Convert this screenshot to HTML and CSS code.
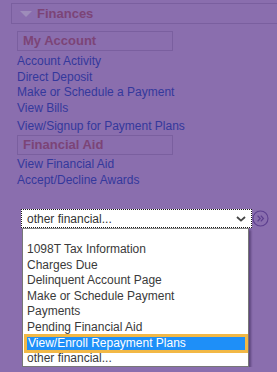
FILE: index.html
```html
<!DOCTYPE html>
<html>
<head>
<meta charset="utf-8">
<link rel="stylesheet" href="styles.css">
</head>
<body>
<div class="panel">
  <div class="hdr"><span class="tri"></span><span class="hdr-t">Finances</span></div>

  <div class="sec-box">My Account</div>
  <ul class="links">
    <li>Account Activity</li>
    <li>Direct Deposit</li>
    <li>Make or Schedule a Payment</li>
    <li>View Bills</li>
    <li class="gap">View/Signup for Payment Plans</li>
  </ul>

  <div class="sec-box sec-fa">Financial Aid</div>
  <ul class="links links-fa">
    <li>View Financial Aid</li>
    <li>Accept/Decline Awards</li>
  </ul>

  <div class="picker">
    <div class="row">
      <div class="select">
        <span class="sel-text">other financial...</span>
        <svg class="chev" width="10" height="6" viewBox="0 0 10 6"><path d="M1 1 L5 4.6 L9 1" fill="none" stroke="#444" stroke-width="1.8"/></svg>
      </div>
      <svg class="go" width="17" height="17" viewBox="0 0 17 17">
        <circle cx="8.5" cy="8.5" r="7.5" fill="none" stroke="#5d3f8f" stroke-width="1.1"/>
        <path d="M5.6 5.6 L8.2 8.5 L5.6 11.4 M8.8 5.6 L11.4 8.5 L8.8 11.4" fill="none" stroke="#5d3f8f" stroke-width="1.3"/>
      </svg>
    </div>
    <ul class="list">
      <li class="opt blank"></li>
      <li class="opt">1098T Tax Information</li>
      <li class="opt">Charges Due</li>
      <li class="opt">Delinquent Account Page</li>
      <li class="opt">Make or Schedule Payment</li>
      <li class="opt">Payments</li>
      <li class="opt">Pending Financial Aid</li>
      <li class="opt sel">View/Enroll Repayment Plans</li>
      <li class="opt">other financial...</li>
    </ul>
  </div>
</div>
</body>
</html>
```

FILE: styles.css
```css
html, body {
  margin: 0;
  padding: 0;
  background: #8a6eae;
  overflow: hidden;
}
body {
  font-family: "Liberation Sans", Arial, sans-serif;
  font-size: 12px;
}
.panel {
  padding-top: 3px;
  width: 277px;
}
.hdr {
  margin-left: 11px;
  height: 19px;
  border: 1px solid #7a5f9f;
  border-right: none;
  display: flex;
  align-items: center;
  padding-left: 8px;
}
.tri {
  width: 0;
  height: 0;
  border-left: 6.5px solid transparent;
  border-right: 6.5px solid transparent;
  border-top: 6px solid #9e8cba;
  margin-right: 5px;
}
.hdr-t {
  font-weight: bold;
  font-size: 13px;
  color: #7c4477;
}
.sec-box {
  margin: 7px 0 0 17px;
  width: 149px;
  height: 18px;
  line-height: 18px;
  border: 1px solid #7a5f9f;
  padding-left: 5px;
  font-weight: bold;
  font-size: 13px;
  color: #7c4477;
}
.links {
  list-style: none;
  margin: 3px 0 0 17px;
  padding: 0;
  line-height: 15.5px;
  color: #34389c;
}
.links .gap {
  margin-top: 2.5px;
}
.sec-fa {
  margin-top: 1px;
}
.links-fa {
  margin-top: 2px;
}
.picker {
  margin-top: 21px;
}
.row {
  display: flex;
  align-items: center;
  margin-left: 21px;
}
.select {
  box-sizing: border-box;
  width: 231px;
  height: 19px;
  border: 1px dotted #1a1a1a;
  background: #fff;
  display: flex;
  align-items: center;
  justify-content: space-between;
  padding: 0 5px 0 5px;
  color: #333;
}
.chev {
  display: block;
  margin-top: 1px;
}
.go {
  display: block;
  margin-left: 0;
}
.list {
  list-style: none;
  margin: 0 0 0 22px;
  padding: 0;
  width: 225px;
  border: 1px solid #777;
  border-top: 1px solid #8a8a8a;
  background: #fff;
  box-shadow: 2px 2px 2px rgba(40, 20, 70, 0.45);
  color: #3a3a3a;
}
.opt {
  height: 15.5px;
  line-height: 15.5px;
  padding-left: 4px;
  white-space: nowrap;
}
.opt.blank {
  height: 13px;
}
.opt.sel {
  height: 13px;
  line-height: 13px;
  margin: -1.5px 0 -2px 1px;
  padding-left: 1px;
  border: 3px solid #f2b846;
  background: #1e8ff8;
  color: #fff;
}
```
